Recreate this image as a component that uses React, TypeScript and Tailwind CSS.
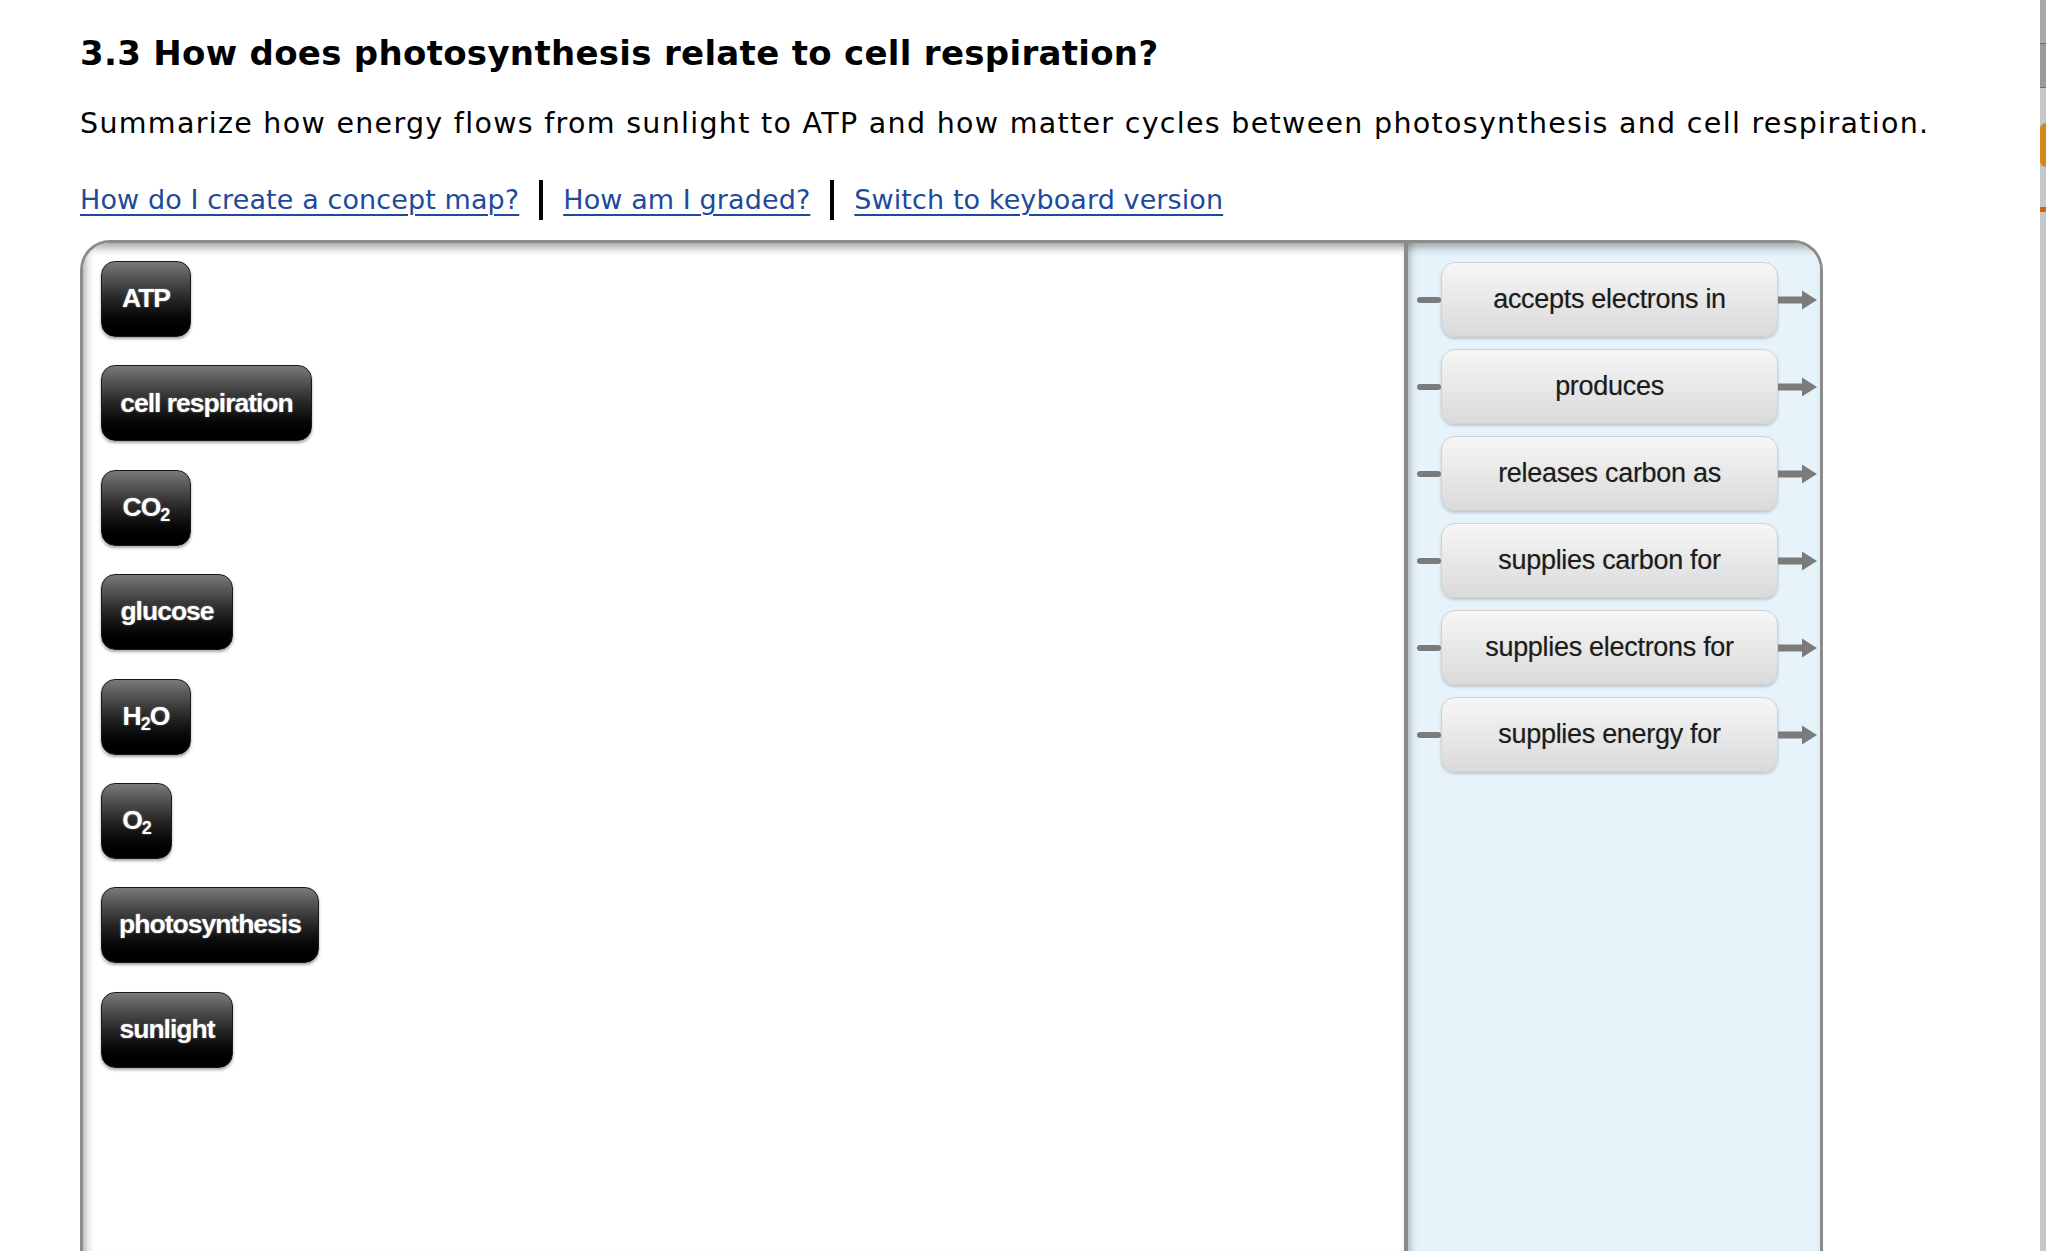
import React from "react";

const concepts: { label: React.ReactNode; w: string }[] = [
  { label: "ATP", w: "w-[90px]" },
  { label: "cell respiration", w: "w-[211px]" },
  {
    label: (
      <>
        CO<sub className="text-[18px] relative top-[5px] align-baseline">2</sub>
      </>
    ),
    w: "w-[90px]",
  },
  { label: "glucose", w: "w-[132px]" },
  {
    label: (
      <>
        H<sub className="text-[18px] relative top-[5px] align-baseline">2</sub>O
      </>
    ),
    w: "w-[90px]",
  },
  {
    label: (
      <>
        O<sub className="text-[18px] relative top-[5px] align-baseline">2</sub>
      </>
    ),
    w: "w-[71px]",
  },
  { label: "photosynthesis", w: "w-[218px]" },
  { label: "sunlight", w: "w-[132px]" },
];

const links = [
  "accepts electrons in",
  "produces",
  "releases carbon as",
  "supplies carbon for",
  "supplies electrons for",
  "supplies energy for",
];

function Arrow() {
  return (
    <svg width="39" height="20" viewBox="0 0 39 20" className="shrink-0">
      <rect x="0" y="6.5" width="27" height="7" fill="#7b7b7b" />
      <path d="M24 0.5 L39 10 L24 19.5 Z" fill="#7b7b7b" />
    </svg>
  );
}

export default function App() {
  return (
    <div className="flex h-[1251px] w-full overflow-hidden bg-white">
      <div className="flex min-w-0 flex-1 flex-col pl-[80px] font-['DejaVu_Sans',Verdana,sans-serif] text-black">
        <h1 className="mt-[33px] whitespace-nowrap text-[34px] font-bold leading-[40px] tracking-[0.3px]">
          3.3 How does photosynthesis relate to cell respiration?
        </h1>
        <p className="mt-[31px] whitespace-nowrap text-[28.5px] leading-[40px] tracking-[1.3px]">
          Summarize how energy flows from sunlight to ATP and how matter cycles between photosynthesis and cell
          respiration.
        </p>
        <div className="mt-[35.5px] flex items-center text-[27px] leading-[40px] tracking-[0.1px] text-[#1d4b9a]">
          <a href="#" className="underline decoration-[2px] underline-offset-[5px]">
            How do I create a concept map?
          </a>
          <span className="mx-[20px] h-[40px] w-[4px] bg-black" />
          <a href="#" className="underline decoration-[2px] underline-offset-[5px]">
            How am I graded?
          </a>
          <span className="mx-[20px] h-[40px] w-[4px] bg-black" />
          <a href="#" className="underline decoration-[2px] underline-offset-[5px]">
            Switch to keyboard version
          </a>
        </div>

        <div className="mt-[20.5px] flex w-[1743px] flex-1 overflow-hidden rounded-t-[30px] border-[3px] border-b-0 border-[#8c8c8c]">
          <div className="flex w-[1321px] flex-col gap-[28.4px] bg-white pl-[18px] pt-[18px] shadow-[inset_0_10px_10px_-6px_rgba(0,0,0,0.4),inset_10px_0_8px_-7px_rgba(0,0,0,0.3)]">
            {concepts.map((c, i) => (
              <div
                key={i}
                className={`${c.w} flex h-[76px] shrink-0 items-center justify-center rounded-[14px] border border-[#1a1a1a] bg-linear-to-b from-[#7a7a7a] via-[#262626] via-50% to-black font-['Liberation_Sans',Arial,sans-serif] text-[26.5px] font-bold tracking-[-1px] text-white shadow-[0_2px_3px_rgba(0,0,0,0.35)] [text-shadow:0_0_2px_rgba(255,255,255,0.45)]`}
              >
                <span className="whitespace-nowrap">{c.label}</span>
              </div>
            ))}
          </div>
          <div className="w-[4px] shrink-0 bg-[#8a8a8a]" />
          <div className="flex flex-1 flex-col gap-[12px] bg-[#e6f3fa] pl-[9px] pt-[19px] shadow-[inset_0_10px_10px_-6px_rgba(0,0,0,0.35),inset_9px_0_8px_-7px_rgba(0,0,0,0.25)]">
            {links.map((l) => (
              <div key={l} className="flex h-[75px] items-center">
                <span className="h-[6px] w-[24px] shrink-0 rounded-[3px] bg-[#7b7b7b]" />
                <div className="flex h-[75px] w-[337px] shrink-0 items-center justify-center rounded-[14px] border border-[#d2d2d2] bg-linear-to-b from-[#f6f6f6] to-[#dadada] font-['Liberation_Sans',Arial,sans-serif] text-[27px] tracking-[-0.3px] text-[#1c1c1c] shadow-[0_2px_3px_rgba(0,0,0,0.18)] [text-shadow:0_0_1px_rgba(0,0,0,0.3)]">
                  {l}
                </div>
                <Arrow />
              </div>
            ))}
          </div>
        </div>
      </div>

      <div className="flex w-[6px] shrink-0 flex-col bg-[#c6c6c6]">
        <div className="h-[43px] bg-[#a9a9a9]" />
        <div className="h-[1px] bg-[#6e6e6e]" />
        <div className="h-[43px] bg-[#9a9a9a]" />
        <div className="h-[1px] bg-[#6e6e6e]" />
        <div className="mt-[35px] h-[44px] rounded-l-full bg-[#d3871f]" />
        <div className="mt-[40px] h-[5px] bg-[#c8661a]" />
      </div>
    </div>
  );
}
